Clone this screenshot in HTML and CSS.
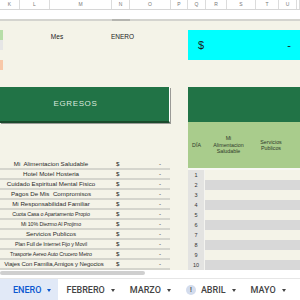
FILE: index.html
```html
<html>
    <head>
        <link rel="stylesheet" href="styles.css">
    </head>
    <body>
        <div class="colhead">
            <span class="col" style="width:20px">K</span>
            <span class="col" style="width:30px">L</span>
            <span class="col" style="width:62px">M</span>
            <span class="col" style="width:18px">N</span>
            <span class="col" style="width:41px">O</span>
            <span class="col" style="width:17px">P</span>
            <span class="col" style="width:18px">Q</span>
            <span class="col" style="width:21px">R</span>
            <span class="col" style="width:29px">S</span>
            <span class="col" style="width:23px">T</span>
            <span class="col" style="width:18px">U</span>
            <span class="col" style="width:3px"></span>
        </div>
        <div class="frozen"><span class="frozen-n"></span></div>

        <div class="sheet">
            <div class="left">
                <div class="top">
                    <div class="marks">
                        <i class="mark green"></i>
                        <i class="mark gray"></i>
                        <i class="mark"></i>
                        <i class="mark peach"></i>
                    </div>
                    <div class="mes-row">
                        <span class="mes">Mes</span>
                        <span class="mes-value">ENERO</span>
                    </div>
                </div>

                <div class="egresos">EGRESOS</div>

                <div class="list">
                    <div class="row"><span class="label">Mi&nbsp; Alimentacion Saludable</span><span class="cur">$</span><span class="amt">-</span></div>
                    <div class="row"><span class="label">Hotel Motel Hosteria</span><span class="cur">$</span><span class="amt">-</span></div>
                    <div class="row"><span class="label">Cuidado Espiritual Mental Fisico</span><span class="cur">$</span><span class="amt">-</span></div>
                    <div class="row"><span class="label">Pagos De Mis&nbsp; Compromisos</span><span class="cur">$</span><span class="amt">-</span></div>
                    <div class="row"><span class="label">Mi Responsabilidad Familiar</span><span class="cur">$</span><span class="amt">-</span></div>
                    <div class="row"><span class="label small">Cuota Casa o Apartamento Propio</span><span class="cur">$</span><span class="amt">-</span></div>
                    <div class="row"><span class="label small">Mi 10% Diezmo Al Projimo</span><span class="cur">$</span><span class="amt">-</span></div>
                    <div class="row"><span class="label">Servicios Publicos</span><span class="cur">$</span><span class="amt">-</span></div>
                    <div class="row"><span class="label small">Plan Full de Internet Fijo y Movil</span><span class="cur">$</span><span class="amt">-</span></div>
                    <div class="row"><span class="label small">Trasporte Aereo Auto Crucero Metro</span><span class="cur">$</span><span class="amt">-</span></div>
                    <div class="row"><span class="label long">Viajes Con Familia,Amigos y Negocios</span><span class="cur">$</span><span class="amt">-</span></div>
                </div>
            </div>

            <div class="right">
                <div class="total"><span>$</span><span>-</span></div>
                <div class="band"></div>
                <div class="thead">
                    <span>DÍA</span>
                    <span>Mi<br>Alimentacion<br>Saludable</span>
                    <span>Servicios<br>Publicos</span>
                    <span></span>
                </div>
                <div class="days">
                    <div class="day"><span class="num">1</span><span></span></div>
                    <div class="day"><span class="num">2</span><span></span></div>
                    <div class="day"><span class="num">3</span><span></span></div>
                    <div class="day"><span class="num">4</span><span></span></div>
                    <div class="day"><span class="num">5</span><span></span></div>
                    <div class="day"><span class="num">6</span><span></span></div>
                    <div class="day"><span class="num">7</span><span></span></div>
                    <div class="day"><span class="num">8</span><span></span></div>
                    <div class="day"><span class="num">9</span><span></span></div>
                    <div class="day"><span class="num">10</span><span></span></div>
                </div>
            </div>
        </div>

        <div class="scroll"><div class="thumb"></div></div>

        <div class="tabs">
            <a href="#" class="tab active">ENERO <i class="arrow"></i></a>
            <a href="#" class="tab">FEBRERO <i class="arrow"></i></a>
            <a href="#" class="tab">MARZO <i class="arrow"></i></a>
            <a href="#" class="tab"><span class="alert">!</span>ABRIL <i class="arrow"></i></a>
            <a href="#" class="tab">MAYO <i class="arrow"></i></a>
        </div>
    </body>
</html>
```

FILE: styles.css
```css
html, body {
    margin: 0;
    padding: 0;
    width: 300px;
    height: 300px;
    overflow: hidden;
    background: #fff;
    font-family: "Liberation Sans", Arial, sans-serif;
    color: #333;
}
.colhead {
    display: flex;
    height: 10px;
    border-bottom: 1px solid #d6d6d6;
    box-sizing: border-box;
    overflow: hidden;
}
.col {
    flex: none;
    box-sizing: border-box;
    border-right: 1px solid #dcdcdc;
    font-size: 5px;
    line-height: 9px;
    text-align: center;
    color: #777;
}
.frozen {
    height: 11px;
    box-sizing: border-box;
    border-bottom: 2px solid #d4d4cf;
    position: relative;
}
.frozen-n {
    position: absolute;
    left: 112px;
    width: 18px;
    bottom: -2px;
    height: 2px;
    background: #b5b5b0;
}
.sheet {
    display: flex;
    height: 249px;
    background: #f4f3e8;
    overflow: hidden;
}
.left {
    width: 170px;
    flex: none;
}
.top {
    display: flex;
    height: 66px;
}
.marks {
    width: 3px;
    padding-top: 9px;
    display: flex;
    flex-direction: column;
}
.mark {
    height: 10px;
}
.mark.green { background: #b7dea8; }
.mark.gray { background: #e6e6e6; }
.mark.peach { background: #f8c8a8; }
.mes-row {
    display: flex;
    padding-top: 11px;
    font-size: 6.5px;
    line-height: 9px;
    color: #222;
}
.mes {
    width: 108px;
    text-align: center;
}
.mes-value {
    width: 22px;
    text-align: center;
}
.egresos {
    height: 34px;
    background: #217346;
    border-bottom: 2px solid #1a4a2c;
    border-right: 1px solid #fff;
    box-shadow: 1px 1px 0 #9a9a96;
    color: #dbe8de;
    font-size: 8px;
    letter-spacing: 0.6px;
    line-height: 34px;
    text-align: center;
    padding-right: 18px;
}
.list {
    margin-top: 37px;
}
.row {
    display: grid;
    grid-template-columns: 112px 18px 40px;
    height: 10px;
    box-sizing: border-box;
    border-bottom: 2px solid #d5d5cd;
    font-size: 6.2px;
    line-height: 8px;
    color: #2a2a2a;
}
.label {
    padding-right: 10px;
    white-space: nowrap;
    display: flex;
    justify-content: center;
}
.label.small {
    font-size: 5.3px;
    letter-spacing: -0.1px;
}
.label.long {
    font-size: 6px;
    letter-spacing: -0.1px;
    padding-right: 4px;
}
.cur {
    padding-left: 4px;
}
.amt {
    text-align: right;
    padding-right: 9px;
}
.right {
    margin-left: 18px;
    width: 112px;
    flex: none;
}
.total {
    margin-top: 9px;
    height: 30px;
    background: #00ffff;
    display: flex;
    justify-content: space-between;
    align-items: center;
    padding: 0 9px 0 10px;
    font-size: 11px;
    color: #1a1a1a;
}
.band {
    margin-top: 27px;
    height: 35px;
    background: #217346;
}
.thead {
    height: 46px;
    background: #a9cc8c;
    display: grid;
    grid-template-columns: 17px 47px 38px 10px;
    align-items: center;
    text-align: center;
    font-size: 5.3px;
    line-height: 6.5px;
    color: #2f3a2a;
    border-bottom: 2px solid #f8f8f4;
}
.day {
    display: grid;
    grid-template-columns: 17px 1fr;
    height: 10px;
}
.day .num {
    background: #e3e3e1;
    border-right: 1px solid #f4f4f0;
    font-size: 5.5px;
    line-height: 10px;
    text-align: center;
    color: #333;
}
.day:nth-child(even) span:last-child {
    background: #d8d8d8;
}
.scroll {
    height: 7px;
    padding-top: 1px;
    border-bottom: 1px solid #e6e6e6;
}
.thumb {
    width: 145px;
    height: 4px;
    border-radius: 2px;
    background: #cfcfcf;
}
.tabs {
    display: flex;
    height: 22px;
    font-family: Roboto, "Liberation Sans", sans-serif;
    font-size: 9px;
    font-weight: 500;
}
.tab {
    display: flex;
    align-items: center;
    padding: 0 7px 0 8px;
    color: #444;
    text-decoration: none;
    white-space: nowrap;
}
.tab.active {
    padding-left: 13px;
    background: #e1e9f7;
    color: #0b57d0;
}
.arrow {
    margin-left: 6px;
    width: 0;
    height: 0;
    border-left: 2.5px solid transparent;
    border-right: 2.5px solid transparent;
    border-top: 3px solid currentColor;
}
.alert {
    width: 10px;
    height: 10px;
    border-radius: 50%;
    background: #d3dced;
    color: #444;
    font-size: 7px;
    line-height: 10px;
    text-align: center;
    margin-right: 5px;
}
```
